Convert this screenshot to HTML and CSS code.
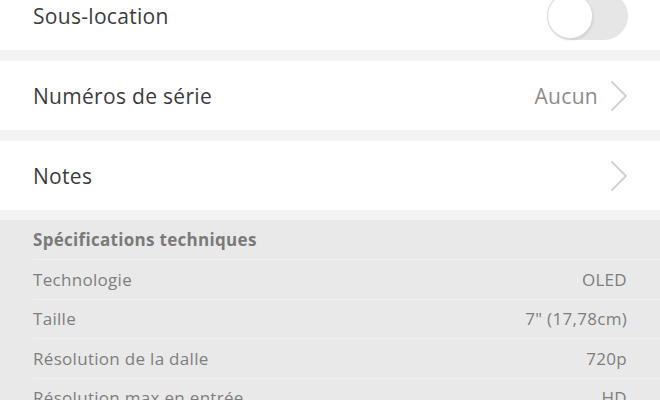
FILE: index.html
```html
<!DOCTYPE html>
<html>

<head>
    <meta charset="UTF-8">
    <title>Fiche produit</title>
    <link rel="stylesheet" href="styles.css">
</head>

<body>
    <div class="page">
        <div class="group">
            <div class="row">
                <span class="row-label">Sous-location</span>
                <span class="switch"><span class="switch-knob"></span></span>
            </div>
        </div>

        <div class="group">
            <div class="row">
                <span class="row-label">Numéros de série</span>
                <span class="row-value">Aucun</span>
                <svg class="chevron" width="18" height="32" viewBox="0 0 18 32">
                    <polyline points="2,2 16,16 2,30" fill="none" stroke="#d4d4d4" stroke-width="2" stroke-linecap="round" stroke-linejoin="round" />
                </svg>
            </div>
        </div>

        <div class="group">
            <div class="row">
                <span class="row-label">Notes</span>
                <svg class="chevron" width="18" height="32" viewBox="0 0 18 32">
                    <polyline points="2,2 16,16 2,30" fill="none" stroke="#d4d4d4" stroke-width="2" stroke-linecap="round" stroke-linejoin="round" />
                </svg>
            </div>
        </div>

        <div class="specs">
            <h3 class="specs-title">Spécifications techniques</h3>
            <div class="spec-row">
                <span>Technologie</span>
                <span>OLED</span>
            </div>
            <div class="spec-row">
                <span>Taille</span>
                <span>7" (17,78cm)</span>
            </div>
            <div class="spec-row">
                <span>Résolution de la dalle</span>
                <span>720p</span>
            </div>
            <div class="spec-row">
                <span>Résolution max en entrée</span>
                <span>HD</span>
            </div>
        </div>
    </div>
</body>

</html>
```

FILE: styles.css
```css
/* fiche produit */
body {
    margin: 0;
    background: #f3f3f3;
    font-family: "Open Sans", "Noto Sans", sans-serif;
    overflow: hidden;
}

.page {
    margin-top: -19px;
}

.group {
    background: #fff;
    margin-bottom: 11px;
}

.row {
    display: flex;
    align-items: center;
    height: 69px;
    padding: 0 32px 0 33px;
    font-size: 21px;
    letter-spacing: 0.3px;
    color: #3c3c3c;
}

.row-label {
    flex: 1;
}

.row-value {
    color: #8c8c8c;
    margin-right: 12px;
}

.chevron {
    display: block;
}

.switch {
    position: relative;
    width: 81px;
    height: 48px;
    border-radius: 24px;
    background: #e6e6e6;
}

.switch-knob {
    position: absolute;
    left: 1px;
    top: 2px;
    width: 44px;
    height: 44px;
    border-radius: 50%;
    background: #fff;
    box-shadow: 0 0 0 1px #dcdcdc, 1px 2px 3px rgba(0, 0, 0, 0.12);
}

.specs {
    background: #e9e9e9;
    margin-top: -1px;
    padding-left: 33px;
    color: #7e7e7e;
    font-size: 17px;
    letter-spacing: 0.3px;
}

.specs-title {
    margin: 0;
    height: 39px;
    line-height: 40px;
    font-size: 17px;
    font-weight: bold;
    color: #7a7a7a;
    border-bottom: 1px solid #f1f1f1;
}

.spec-row {
    display: flex;
    justify-content: space-between;
    align-items: center;
    height: 38.5px;
    padding-right: 33px;
    border-bottom: 1px solid #f1f1f1;
}
```
